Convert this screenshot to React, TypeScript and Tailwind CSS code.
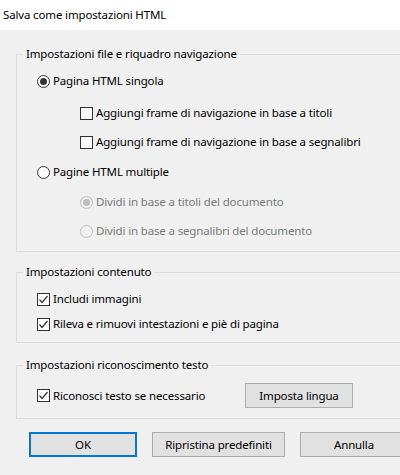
import React from 'react'

function Radio({ checked, disabled }: { checked?: boolean; disabled?: boolean }) {
  const edge = disabled ? 'border-[#bcbcbc] bg-[#f0f0f0]' : 'border-[#333333] bg-white'
  const dot = disabled ? 'bg-[#bcbcbc]' : 'bg-[#333333]'
  return (
    <div className={`w-[13px] h-[13px] rounded-full border flex items-center justify-center flex-shrink-0 ${edge}`}>
      {checked && <div className={`w-[7px] h-[7px] rounded-full ${dot}`} />}
    </div>
  )
}

function Checkbox({ checked }: { checked?: boolean }) {
  return (
    <div className="w-[13px] h-[13px] border border-[#333333] bg-white flex-shrink-0">
      {checked && (
        <svg width="11" height="11" viewBox="0 0 11 11">
          <polyline points="1.5,5.5 4,8.5 9.5,2" fill="none" stroke="#333333" strokeWidth="1.2" />
        </svg>
      )}
    </div>
  )
}

function Row({ children, className = '' }: { children: React.ReactNode; className?: string }) {
  return <div className={`flex items-center gap-[3px] h-[16px] ${className}`}>{children}</div>
}

function Button({ children, width, focused }: { children: React.ReactNode; width: string; focused?: boolean }) {
  return (
    <button
      className={`h-[25px] ${width} bg-[#e1e1e1] flex items-center justify-center flex-shrink-0 ${
        focused ? 'border-2 border-[#0078d7]' : 'border border-[#adadad]'
      }`}
    >
      {children}
    </button>
  )
}

export default function App() {
  return (
    <div className="w-[400px] h-[475px] overflow-hidden bg-[#f0f0f0] font-['Noto_Sans',sans-serif] text-[11.5px] tracking-[-0.15px] leading-[16px] text-black">
      {/* Title */}
      <div className="h-[30px] bg-white pl-[3px] pt-[7px]">Salva come impostazioni HTML</div>

      <div className="pl-[16px] pt-[16px]">
        {/* File and navigation */}
        <fieldset className="w-[400px] border-t border-l border-b border-[#dcdcdc] pb-[12px]">
          <legend className="ml-[6px] px-[3px]">Impostazioni file e riquadro navigazione</legend>
          <Row className="mt-[11px] pl-[20px]">
            <Radio checked />
            <span>Pagina HTML singola</span>
          </Row>
          <Row className="mt-[16px] pl-[63px]">
            <Checkbox />
            <span>Aggiungi frame di navigazione in base a titoli</span>
          </Row>
          <Row className="mt-[13px] pl-[63px]">
            <Checkbox />
            <span>Aggiungi frame di navigazione in base a segnalibri</span>
          </Row>
          <Row className="mt-[14px] pl-[20px]">
            <Radio />
            <span>Pagine HTML multiple</span>
          </Row>
          <Row className="mt-[14px] pl-[63px] text-[#7a7a7a]">
            <Radio checked disabled />
            <span>Dividi in base a titoli del documento</span>
          </Row>
          <Row className="mt-[13px] pl-[63px] text-[#7a7a7a]">
            <Radio disabled />
            <span>Dividi in base a segnalibri del documento</span>
          </Row>
        </fieldset>

        {/* Content */}
        <fieldset className="mt-[12px] w-[400px] border-t border-l border-b border-[#dcdcdc] pb-[10px]">
          <legend className="ml-[6px] px-[3px]">Impostazioni contenuto</legend>
          <Row className="mt-[11px] pl-[20px]">
            <Checkbox checked />
            <span>Includi immagini</span>
          </Row>
          <Row className="mt-[9px] pl-[20px]">
            <Checkbox checked />
            <span>Rileva e rimuovi intestazioni e piè di pagina</span>
          </Row>
        </fieldset>

        {/* Text recognition */}
        <fieldset className="mt-[14px] w-[400px] border-t border-l border-b border-[#dcdcdc] pb-[10px]">
          <legend className="ml-[6px] px-[3px]">Impostazioni riconoscimento testo</legend>
          <div className="mt-[10px] pl-[20px] flex items-center">
            <div className="w-[208px] flex items-center gap-[3px]">
              <Checkbox checked />
              <span>Riconosci testo se necessario</span>
            </div>
            <Button width="w-[108px]">Imposta lingua</Button>
          </div>
        </fieldset>
      </div>

      {/* Dialog buttons */}
      <div className="mt-[13px] pl-[29px] flex gap-[15px]">
        <Button width="w-[108px]" focused>OK</Button>
        <Button width="w-[133px]">Ripristina predefiniti</Button>
        <Button width="w-[108px]">Annulla</Button>
      </div>
    </div>
  )
}
